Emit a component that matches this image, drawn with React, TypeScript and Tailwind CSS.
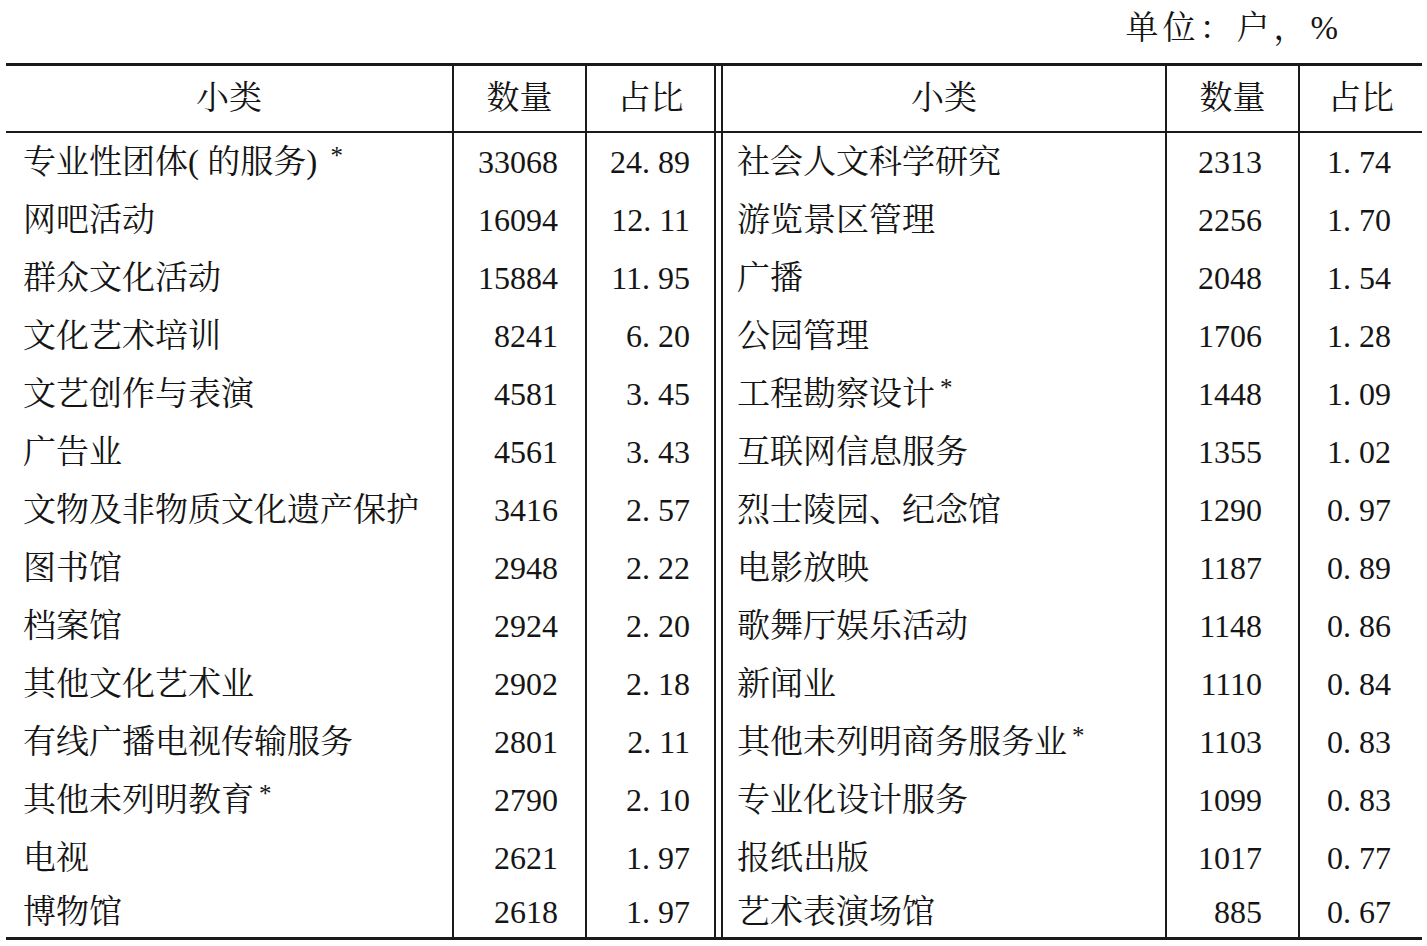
const FONT = "font-['Liberation_Serif','Noto_Serif_CJK_SC','Noto_Sans_CJK_SC',serif]"

type Row = { name: string; star?: boolean; count: string; pct: string }

const left: Row[] = [
  { name: '专业性团体( 的服务) ', star: true, count: '33068', pct: '24. 89' },
  { name: '网吧活动', count: '16094', pct: '12. 11' },
  { name: '群众文化活动', count: '15884', pct: '11. 95' },
  { name: '文化艺术培训', count: '8241', pct: '6. 20' },
  { name: '文艺创作与表演', count: '4581', pct: '3. 45' },
  { name: '广告业', count: '4561', pct: '3. 43' },
  { name: '文物及非物质文化遗产保护', count: '3416', pct: '2. 57' },
  { name: '图书馆', count: '2948', pct: '2. 22' },
  { name: '档案馆', count: '2924', pct: '2. 20' },
  { name: '其他文化艺术业', count: '2902', pct: '2. 18' },
  { name: '有线广播电视传输服务', count: '2801', pct: '2. 11' },
  { name: '其他未列明教育', star: true, count: '2790', pct: '2. 10' },
  { name: '电视', count: '2621', pct: '1. 97' },
  { name: '博物馆', count: '2618', pct: '1. 97' },
]

const right: Row[] = [
  { name: '社会人文科学研究', count: '2313', pct: '1. 74' },
  { name: '游览景区管理', count: '2256', pct: '1. 70' },
  { name: '广播', count: '2048', pct: '1. 54' },
  { name: '公园管理', count: '1706', pct: '1. 28' },
  { name: '工程勘察设计', star: true, count: '1448', pct: '1. 09' },
  { name: '互联网信息服务', count: '1355', pct: '1. 02' },
  { name: '烈士陵园、纪念馆', count: '1290', pct: '0. 97' },
  { name: '电影放映', count: '1187', pct: '0. 89' },
  { name: '歌舞厅娱乐活动', count: '1148', pct: '0. 86' },
  { name: '新闻业', count: '1110', pct: '0. 84' },
  { name: '其他未列明商务服务业', star: true, count: '1103', pct: '0. 83' },
  { name: '专业化设计服务', count: '1099', pct: '0. 83' },
  { name: '报纸出版', count: '1017', pct: '0. 77' },
  { name: '艺术表演场馆', count: '885', pct: '0. 67' },
]

function Name({ row }: { row: Row }) {
  return (
    <span className="whitespace-nowrap">
      {row.name}
      {row.star && <span className="relative -top-[9px] ml-[5px] text-[25px]">*</span>}
    </span>
  )
}

export default function App() {
  return (
    <div className={`w-[1427px] h-[946px] bg-white text-[#151515] ${FONT}`}>
      <div className="ml-[6px] w-[1416px]">
        <div className="h-[63px] flex justify-end pr-[80px] text-[33px] leading-[56px] tracking-[4px]">
          单位：户，%
        </div>

        <div className="border-t-[3px] border-b-[3px] border-[#1a1a1a]">
          {/* header */}
          <div className="flex h-[67px] border-b-2 border-[#1a1a1a] text-[33px] leading-[65px]">
            <div className="w-[448px] border-r-2 border-[#1a1a1a] text-center">小类</div>
            <div className="w-[133px] border-r-2 border-[#1a1a1a] text-center">数量</div>
            <div className="w-[129px] border-r-2 border-[#1a1a1a] text-center">占比</div>
            <div className="w-[5px]" />
            <div className="w-[446px] border-l-2 border-r-2 border-[#1a1a1a] text-center">小类</div>
            <div className="w-[133px] border-r-2 border-[#1a1a1a] text-center">数量</div>
            <div className="w-[122px] text-center">占比</div>
          </div>

          {left.map((l, i) => {
            const r = right[i]
            const last = i === left.length - 1
            const h = last ? 'h-[50px] leading-[50px]' : 'h-[58px] leading-[58px]'
            return (
              <div key={i} className={`flex ${h}`}>
                <div className="w-[448px] border-r-2 border-[#1a1a1a] pl-[17px] text-[33px]">
                  <Name row={l} />
                </div>
                <div className="w-[133px] border-r-2 border-[#1a1a1a] pr-[27px] text-right text-[32px]">{l.count}</div>
                <div className="w-[129px] border-r-2 border-[#1a1a1a] pr-[24px] text-right text-[32px] whitespace-pre">{l.pct}</div>
                <div className="w-[5px]" />
                <div className="w-[446px] border-l-2 border-r-2 border-[#1a1a1a] pl-[14px] text-[33px]">
                  <Name row={r} />
                </div>
                <div className="w-[133px] border-r-2 border-[#1a1a1a] pr-[36px] text-right text-[32px]">{r.count}</div>
                <div className="w-[122px] pr-[31px] text-right text-[32px] whitespace-pre">{r.pct}</div>
              </div>
            )
          })}
        </div>
      </div>
    </div>
  )
}
